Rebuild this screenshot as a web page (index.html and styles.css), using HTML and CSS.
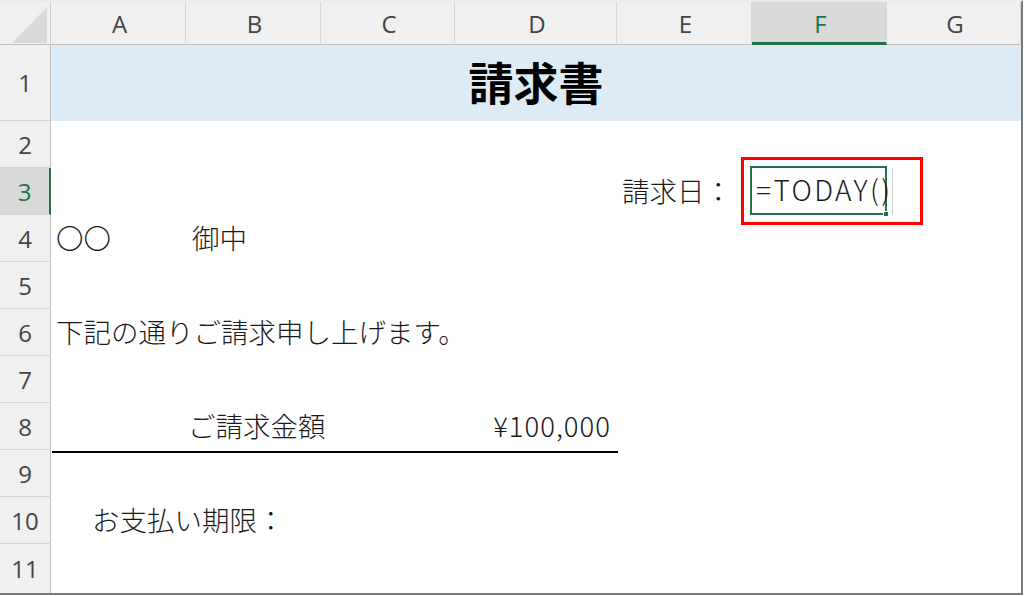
FILE: index.html
```html
<!DOCTYPE html>
<html lang="ja">
  <head>
    <meta charset="utf-8" />
    <title>請求書</title>
    <link rel="stylesheet" href="styles.css">
  </head>
  <body>
    <div class="sheet">
      <!-- column headers -->
      <div class="row head-row">
        <div class="corner">
          <svg width="51" height="43" viewBox="0 0 51 43"><polygon points="47,5 47,41 12,41" fill="#d9d9d9" /></svg>
        </div>
        <div class="col-head">A</div>
        <div class="col-head">B</div>
        <div class="col-head">C</div>
        <div class="col-head">D</div>
        <div class="col-head">E</div>
        <div class="col-head active">F</div>
        <div class="col-head">G</div>
      </div>

      <div class="row title-row">
        <div class="row-head">1</div>
        <div class="cell span-all title">請求書</div>
      </div>

      <div class="row">
        <div class="row-head">2</div>
      </div>

      <div class="row">
        <div class="row-head active">3</div>
        <div class="cell col-e right">請求日：</div>
        <div class="cell col-f editing">
          <span class="formula">=TODAY()</span>
          <span class="handle"></span>
        </div>
        <div class="cell col-g overflow-line"></div>
        <div class="highlight"></div>
      </div>

      <div class="row">
        <div class="row-head">4</div>
        <div class="cell col-a">〇〇</div>
        <div class="cell col-b">御中</div>
      </div>

      <div class="row">
        <div class="row-head">5</div>
      </div>

      <div class="row">
        <div class="row-head">6</div>
        <div class="cell span-all">下記の通りご請求申し上げます。</div>
      </div>

      <div class="row">
        <div class="row-head">7</div>
      </div>

      <div class="row total-row">
        <div class="row-head">8</div>
        <div class="cell col-bc">ご請求金額</div>
        <div class="cell col-d right amount">¥100,000</div>
        <div class="underline"></div>
      </div>

      <div class="row">
        <div class="row-head">9</div>
      </div>

      <div class="row">
        <div class="row-head">10</div>
        <div class="cell span-all indent">お支払い期限：</div>
      </div>

      <div class="row last-row">
        <div class="row-head">11</div>
      </div>
    </div>
  </body>
</html>
```

FILE: styles.css
```css
* {
  margin: 0;
  padding: 0;
  box-sizing: border-box;
}

body {
  width: 1024px;
  height: 596px;
  overflow: hidden;
  background: #ffffff;
  font-family: 'Noto Sans CJK JP', 'Noto Sans', sans-serif;
  color: #1a1a1a;
}

.sheet {
  width: 1023px;
  border-top: 2px solid #e6f0e6;
  border-right: 2px solid #7a7a7a;
  border-bottom: 2px solid #7a7a7a;
}

.row {
  position: relative;
  display: grid;
  grid-template-columns: 51px 135px 135px 134px 162px 135px 135px 134px;
  height: 47px;
}

/* headers */
.head-row {
  height: 43px;
  background: #f0f0f0;
  border-bottom: 1px solid #bdbdbd;
}

.corner {
  border-right: 1px solid #cfcfcf;
}

.corner svg {
  display: block;
}

.col-head {
  display: flex;
  align-items: center;
  justify-content: center;
  font-family: 'Open Sans', 'Noto Sans', sans-serif;
  font-size: 24px;
  color: #444444;
  border-right: 1px solid #d6d6d6;
  padding-left: 3px;
}

.col-head.active {
  background: #d9d9d9;
  color: #217346;
  border-bottom: 3px solid #217346;
  padding-top: 3px;
}

.row-head {
  grid-column: 1;
  display: flex;
  align-items: center;
  justify-content: center;
  background: #f0f0f0;
  font-family: 'Open Sans', 'Noto Sans', sans-serif;
  font-size: 24px;
  color: #444444;
  border-right: 1px solid #bdbdbd;
  border-bottom: 1px solid #d6d6d6;
}

.row-head.active {
  background: #d9d9d9;
  color: #217346;
  border-right: 2px solid #217346;
}

/* cells */
.cell {
  display: flex;
  align-items: center;
  padding: 0 5px 3px;
  font-size: 27.5px;
  font-weight: 300;
  white-space: nowrap;
  grid-row: 1;
}

.right {
  justify-content: flex-end;
}

.col-a { grid-column: 2; }
.col-b { grid-column: 3; padding-left: 6px; }
.col-bc { grid-column: 3 / span 2; padding-left: 2px; }
.col-d { grid-column: 5; padding-right: 6px; }
.col-e { grid-column: 6; padding-right: 20px; }
.col-f { grid-column: 7; }
.col-g { grid-column: 8; }
.span-all { grid-column: 2 / span 7; }

.amount {
  letter-spacing: 1px;
}

.indent {
  padding-left: 41px;
}

.title-row {
  height: 76px;
  background: #ddebf7;
}

.title-row .row-head {
  background: #f0f0f0;
}

.title {
  justify-content: center;
  font-size: 45px;
  font-weight: 700;
  color: #000000;
  padding-bottom: 4px;
}

/* active cell in edit mode */
.editing {
  position: relative;
  margin: -2px 0 0 -2px;
  border: 2px solid #217346;
  padding-left: 4px;
}

.formula {
  font-size: 28px;
  letter-spacing: 2.4px;
}

.handle {
  position: absolute;
  right: -4px;
  bottom: -4px;
  width: 6px;
  height: 6px;
  background: #217346;
  border: 1px solid #ffffff;
}

.overflow-line {
  border-left: 1px solid #cccccc;
  margin-left: 5px;
}

.highlight {
  position: absolute;
  left: 741px;
  top: -11px;
  width: 182px;
  height: 68px;
  border: 3px solid #ff0000;
}

.underline {
  position: absolute;
  left: 52px;
  right: 403px;
  bottom: -3px;
  border-bottom: 2px solid #000000;
}

.last-row {
  height: 49px;
}

.last-row .row-head {
  border-bottom: none;
}
```
